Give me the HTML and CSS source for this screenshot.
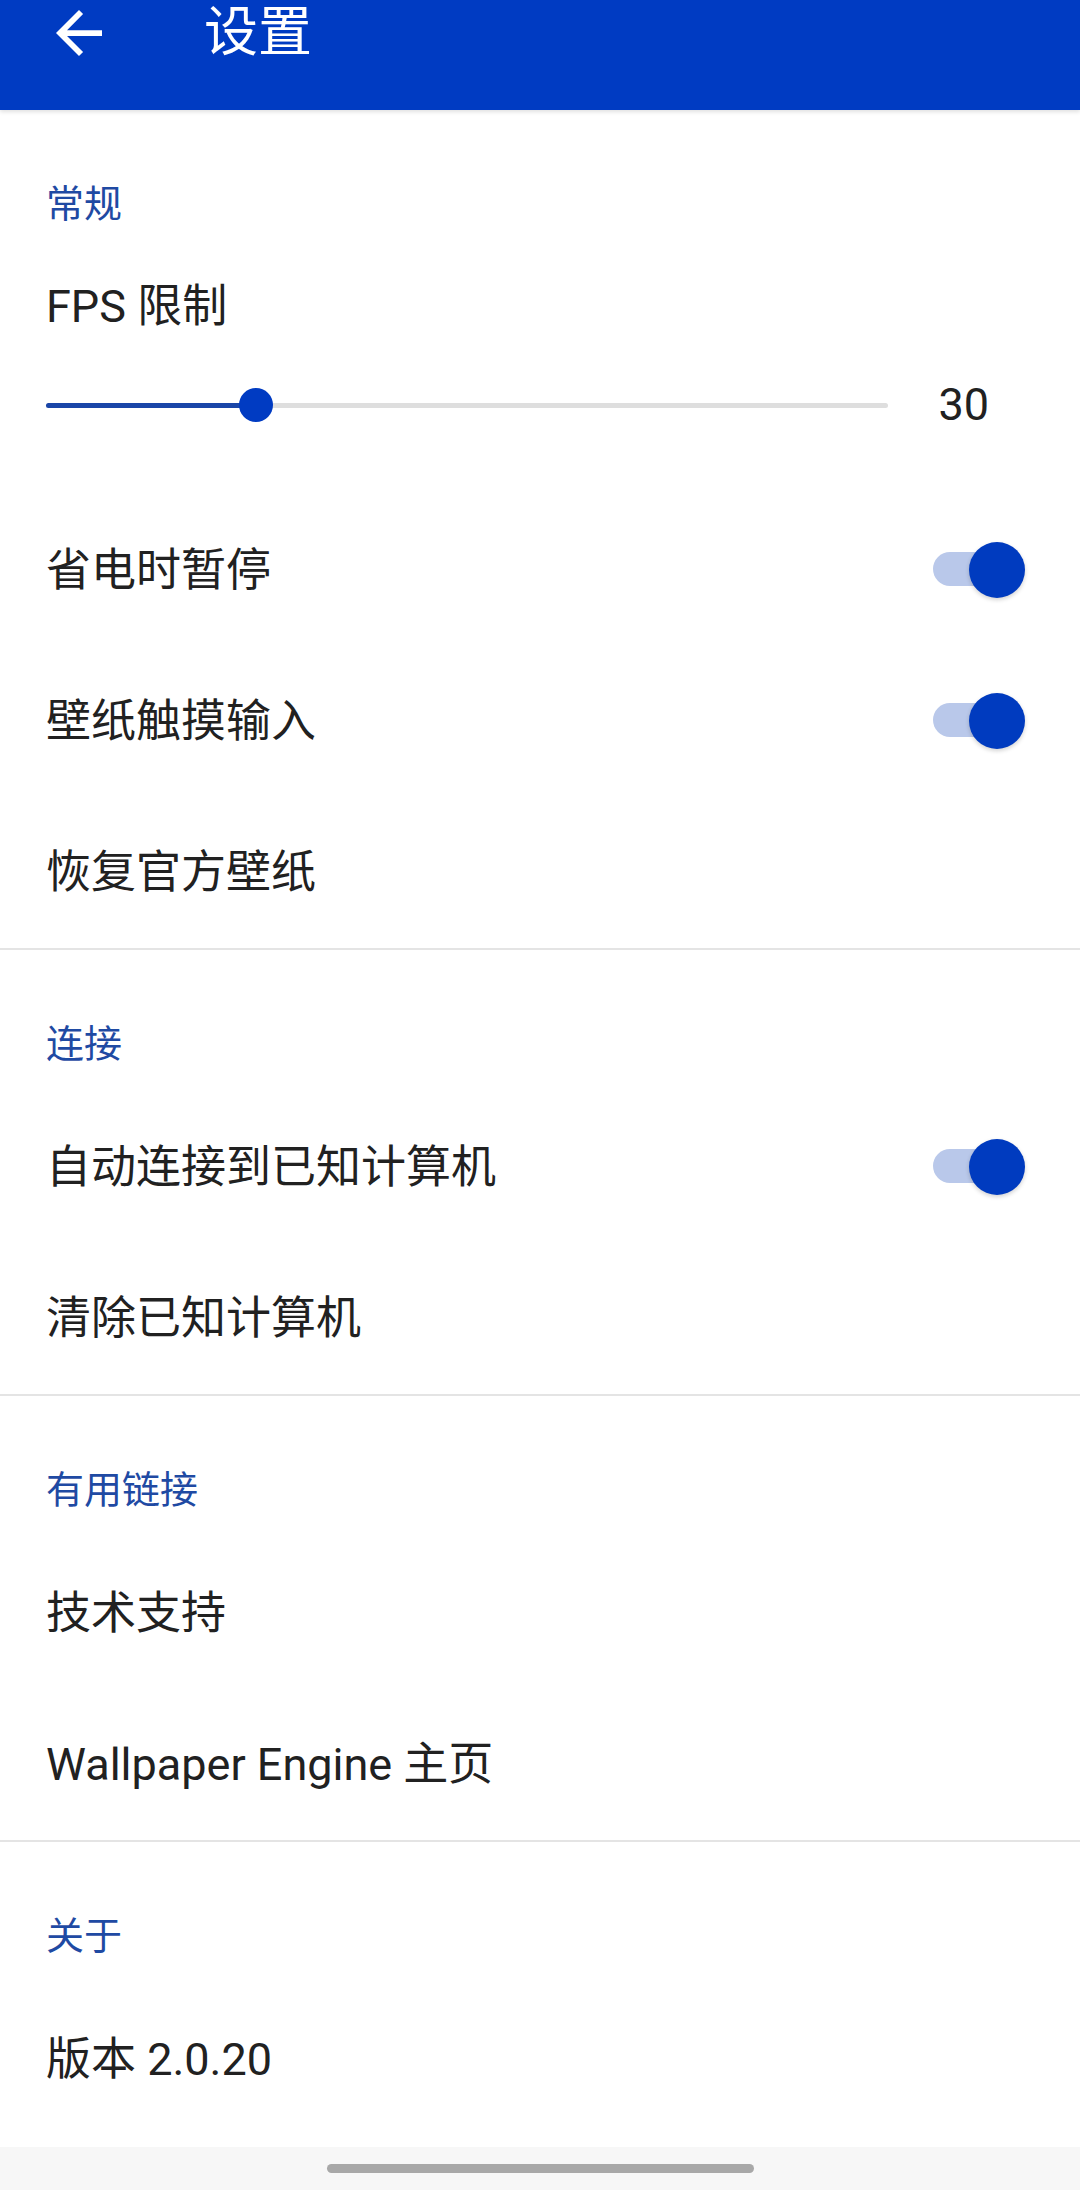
FILE: index.html
```html
<!DOCTYPE html>
<html lang="zh-CN">
<head>
    <meta charset="UTF-8">
    <meta name="viewport" content="width=device-width, initial-scale=1.0">
    <title>设置</title>
    <link rel="stylesheet" href="styles.css">
</head>
<body>

<header class="appbar">
    <svg class="back-icon" viewBox="4 4 16 16" width="46" height="46">
        <path d="M20 11H7.83l5.59-5.59L12 4l-8 8 8 8 1.41-1.41L7.83 13H20v-2z" fill="#fff"/>
    </svg>
    <h1 class="appbar-title">设置</h1>
</header>

<main class="settings">
    <section class="section">
        <h2 class="section-title">常规</h2>
        <div class="slider-block">
            <div class="row-label">FPS 限制</div>
            <div class="slider-row">
                <div class="track">
                    <div class="track-fill" style="width: 24.9%;"></div>
                    <div class="track-thumb" style="left: 24.9%;"></div>
                </div>
                <span class="slider-value">30</span>
            </div>
        </div>
        <div class="row">
            <span class="row-label">省电时暂停</span>
            <span class="switch on"><span class="switch-thumb"></span></span>
        </div>
        <div class="row">
            <span class="row-label">壁纸触摸输入</span>
            <span class="switch on"><span class="switch-thumb"></span></span>
        </div>
        <div class="row">
            <span class="row-label">恢复官方壁纸</span>
        </div>
    </section>

    <section class="section">
        <h2 class="section-title">连接</h2>
        <div class="row">
            <span class="row-label">自动连接到已知计算机</span>
            <span class="switch on"><span class="switch-thumb"></span></span>
        </div>
        <div class="row">
            <span class="row-label">清除已知计算机</span>
        </div>
    </section>

    <section class="section">
        <h2 class="section-title">有用链接</h2>
        <div class="row">
            <span class="row-label">技术支持</span>
        </div>
        <div class="row">
            <span class="row-label">Wallpaper Engine 主页</span>
        </div>
    </section>

    <section class="section last">
        <h2 class="section-title">关于</h2>
        <div class="row">
            <span class="row-label">版本 2.0.20</span>
        </div>
    </section>
</main>

<div class="navbar">
    <div class="nav-handle"></div>
</div>

</body>
</html>
```

FILE: styles.css
```css
body {
    margin: 0;
    padding: 0;
    width: 1080px;
    min-height: 2190px;
    display: flex;
    flex-direction: column;
    background-color: #fff;
    font-family: Roboto, "Noto Sans CJK SC", sans-serif;
    color: #212121;
}

.appbar {
    height: 110px;
    box-sizing: border-box;
    padding: 0 0 44px 56px;
    display: flex;
    align-items: center;
    background-color: #003bc2;
    box-shadow: 0 2px 4px rgba(0, 0, 0, 0.12);
}

.back-icon {
    display: block;
    flex-shrink: 0;
}

.appbar-title {
    margin: 0 0 0 102px;
    font-size: 54px;
    font-weight: 400;
    line-height: 60px;
    color: #fff;
}

.section {
    border-bottom: 2px solid #e4e4e4;
}

.section.last {
    border-bottom: none;
}

.section-title {
    margin: 0;
    padding: 74px 0 28px 46px;
    font-size: 38px;
    font-weight: 400;
    line-height: 40px;
    color: #1f4aa3;
}

.row {
    height: 151px;
    display: flex;
    align-items: center;
    justify-content: space-between;
    padding: 0 55px 0 46px;
}

.row-label {
    font-size: 45px;
    line-height: 50px;
}

.slider-block {
    height: 243px;
    box-sizing: border-box;
    padding: 30px 0 0 46px;
}

.slider-row {
    height: 60px;
    margin-top: 43px;
    display: flex;
    align-items: center;
    gap: 50px;
    padding-right: 91px;
}

.track {
    flex: 1;
    height: 5px;
    background-color: #dedede;
    position: relative;
    border-radius: 3px;
}

.track-fill {
    height: 100%;
    background-color: #1a46a8;
    border-radius: 3px;
}

.track-thumb {
    position: absolute;
    top: 50%;
    width: 34px;
    height: 34px;
    margin: -17px 0 0 -17px;
    border-radius: 50%;
    background-color: #003bc2;
}

.slider-value {
    font-size: 45px;
    line-height: 50px;
}

.switch {
    position: relative;
    width: 80px;
    height: 34px;
    margin: -3px 12px 0 0;
    border-radius: 17px;
    background-color: #b9c8ea;
}

.switch-thumb {
    position: absolute;
    top: 50%;
    right: -12px;
    width: 56px;
    height: 56px;
    margin-top: -27px;
    border-radius: 50%;
    background-color: #003bbf;
    box-shadow: 0 2px 4px rgba(0, 0, 0, 0.18);
}

.navbar {
    margin-top: auto;
    height: 43px;
    background-color: #f7f7f7;
    display: flex;
    justify-content: center;
    padding-top: 17px;
    box-sizing: border-box;
}

.nav-handle {
    width: 427px;
    height: 9px;
    border-radius: 5px;
    background-color: #a8a8a8;
}
```
